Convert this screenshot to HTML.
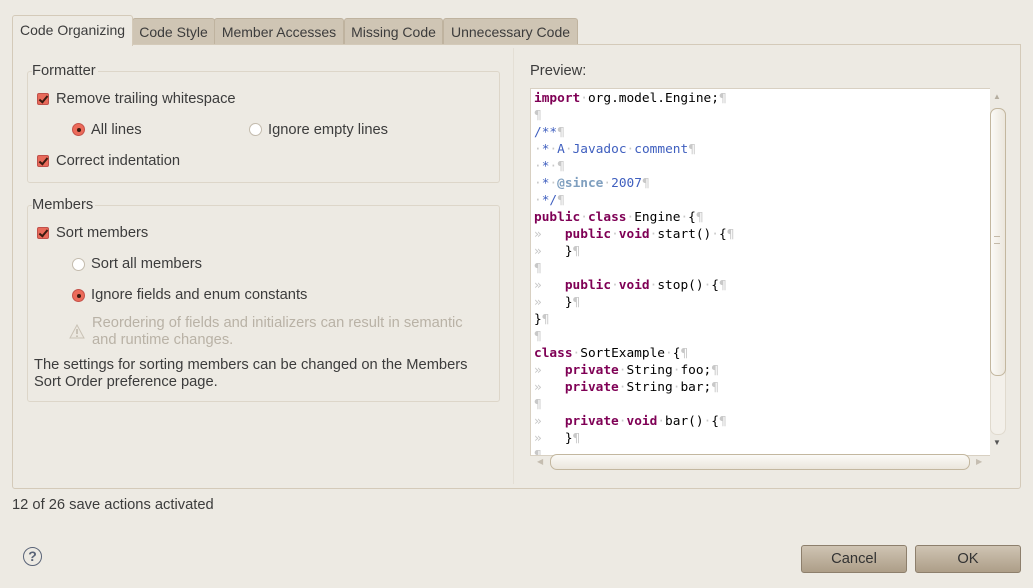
<!DOCTYPE html>
<html><head><meta charset="utf-8"><style>
body{margin:0;width:1033px;height:588px;background:#edeae3;font-family:"Liberation Sans",sans-serif;font-size:14.7px;color:#3c3c3c;position:relative;overflow:hidden}
.a{position:absolute;white-space:nowrap}
.tab{position:absolute;top:18px;height:26px;background:#cfc5b4;border:1px solid #bfb39f;border-bottom:none;border-radius:3px 3px 0 0;line-height:27px;text-align:center;color:#3c3c3c;font-size:14px}
.grp{position:absolute;border:1px solid #ddd6c9;border-radius:3px}
.cb{position:absolute;width:10px;height:10px;border:1px solid #c0504a;background:#e86a5a;border-radius:2px}
.cb:after{content:"";position:absolute;left:3px;top:0px;width:3px;height:7px;border:solid #3a1a10;border-width:0 2px 2px 0;transform:rotate(40deg)}
.rb{position:absolute;width:11px;height:11px;border:1px solid #c4bcae;border-radius:50%;background:#fff}
.rb.on{background:#ec6b5a;border-color:#c4524a}
.rb.on:after{content:"";position:absolute;left:3.5px;top:3.5px;width:4px;height:4px;border-radius:50%;background:#3a1a10}
pre{margin:0;font-family:"DejaVu Sans Mono","Liberation Mono",monospace;font-size:12.8px;line-height:17px;color:#000}
.k{color:#7f0055;font-weight:bold}.c{color:#3f5fbf}.p{color:#c8c8c8}.tg{color:#7f9fbf;font-weight:bold}
.btn{position:absolute;top:545px;height:26px;width:104px;border:1px solid #8d7f6c;border-radius:3px;background:linear-gradient(#cfc4b3,#ad9e88);text-align:center;line-height:27px;color:#333}
.lbl{background:#edeae3;padding-right:2px}
</style></head><body>
<div class="tab" style="left:132px;width:81px">Code Style</div>
<div class="tab" style="left:214px;width:128px">Member Accesses</div>
<div class="tab" style="left:344px;width:97px">Missing Code</div>
<div class="tab" style="left:443px;width:133px">Unnecessary Code</div>
<div class="a" style="left:12px;top:44px;width:1007px;height:443px;border:1px solid #d4cab9;border-radius:0 0 3px 3px"></div>
<div class="a" style="left:12px;top:15px;width:119px;height:30px;background:#edeae3;border:1px solid #d4cab9;border-bottom:none;border-radius:3px 3px 0 0;line-height:29px;text-align:center;font-size:14px">Code Organizing</div>
<div class="a" style="left:513px;top:48px;width:1px;height:436px;background:#e4dfd5"></div>

<div class="grp" style="left:27px;top:71px;width:471px;height:110px"></div>
<div class="a lbl" style="left:32px;top:63px">Formatter</div>
<div class="cb" style="left:37px;top:93px"></div><div class="a" style="left:56px;top:91px">Remove trailing whitespace</div>
<div class="rb on" style="left:72px;top:123px"></div><div class="a" style="left:91px;top:122px">All lines</div>
<div class="rb" style="left:249px;top:123px"></div><div class="a" style="left:268px;top:122px">Ignore empty lines</div>
<div class="cb" style="left:37px;top:155px"></div><div class="a" style="left:56px;top:153px">Correct indentation</div>

<div class="grp" style="left:27px;top:205px;width:471px;height:195px"></div>
<div class="a lbl" style="left:32px;top:197px">Members</div>
<div class="cb" style="left:37px;top:227px"></div><div class="a" style="left:56px;top:225px">Sort members</div>
<div class="rb" style="left:72px;top:258px"></div><div class="a" style="left:91px;top:256px">Sort all members</div>
<div class="rb on" style="left:72px;top:289px"></div><div class="a" style="left:91px;top:287px">Ignore fields and enum constants</div>
<svg class="a" style="left:69px;top:324px" width="16" height="15"><path d="M8 1 L15 14 H1 Z" fill="#ece8e0" stroke="#c9c2b5"/><path d="M8 5v5M8 11.5v1.5" stroke="#c0b9ac" stroke-width="1.6"/></svg>
<div class="a" style="left:92px;top:315px;color:#b9b2a6;line-height:17px">Reordering of fields and initializers can result in semantic<br>and runtime changes.</div>
<div class="a" style="left:34px;top:357px;line-height:17px">The settings for sorting members can be changed on the Members<br>Sort Order preference page.</div>

<div class="a" style="left:530px;top:63px">Preview:</div>
<div class="a" style="left:530px;top:88px;width:459px;height:366px;background:#fff;border:1px solid #d8d0c2;border-right:none;overflow:hidden">
<pre style="padding:0 0 0 3px;margin-top:1px"><span class="k">import</span><span class="p">·</span>org.model.Engine;<span class="p">¶</span>
<span class="p">¶</span>
<span class="c">/**</span><span class="p">¶</span>
<span class="p">·</span><span class="c">*</span><span class="p">·</span><span class="c">A</span><span class="p">·</span><span class="c">Javadoc</span><span class="p">·</span><span class="c">comment</span><span class="p">¶</span>
<span class="p">·</span><span class="c">*</span><span class="p">·¶</span>
<span class="p">·</span><span class="c">*</span><span class="p">·</span><span class="tg">@since</span><span class="p">·</span><span class="c">2007</span><span class="p">¶</span>
<span class="p">·</span><span class="c">*/</span><span class="p">¶</span>
<span class="k">public</span><span class="p">·</span><span class="k">class</span><span class="p">·</span>Engine<span class="p">·</span>{<span class="p">¶</span>
<span class="p">»   </span><span class="k">public</span><span class="p">·</span><span class="k">void</span><span class="p">·</span>start()<span class="p">·</span>{<span class="p">¶</span>
<span class="p">»   </span>}<span class="p">¶</span>
<span class="p">¶</span>
<span class="p">»   </span><span class="k">public</span><span class="p">·</span><span class="k">void</span><span class="p">·</span>stop()<span class="p">·</span>{<span class="p">¶</span>
<span class="p">»   </span>}<span class="p">¶</span>
}<span class="p">¶</span>
<span class="p">¶</span>
<span class="k">class</span><span class="p">·</span>SortExample<span class="p">·</span>{<span class="p">¶</span>
<span class="p">»   </span><span class="k">private</span><span class="p">·</span>String<span class="p">·</span>foo;<span class="p">¶</span>
<span class="p">»   </span><span class="k">private</span><span class="p">·</span>String<span class="p">·</span>bar;<span class="p">¶</span>
<span class="p">¶</span>
<span class="p">»   </span><span class="k">private</span><span class="p">·</span><span class="k">void</span><span class="p">·</span>bar()<span class="p">·</span>{<span class="p">¶</span>
<span class="p">»   </span>}<span class="p">¶</span>
<span class="p">¶</span></pre></div>
<div class="a" style="left:993px;top:92px;font-size:8px;color:#b5ad9f">▲</div>
<div class="a" style="left:990px;top:108px;width:14px;height:325px;border:1px solid #e0dace;border-radius:7px;background:#f3f0ea"></div>
<div class="a" style="left:990px;top:108px;width:14px;height:266px;border:1px solid #c3b79f;border-radius:7px;background:linear-gradient(90deg,#fbfaf7,#ebe6dc)"></div>
<div class="a" style="left:994px;top:236px;width:6px;height:6px;border-top:1px solid #c3b9a8;border-bottom:1px solid #c3b9a8"></div>
<div class="a" style="left:993px;top:438px;font-size:8px;color:#555">▼</div>
<div class="a" style="left:537px;top:457px;font-size:8px;color:#c5bdb0">◀</div>
<div class="a" style="left:550px;top:454px;width:418px;height:14px;border:1px solid #c3b79f;border-radius:7px;background:linear-gradient(#fbfaf7,#ebe6dc)"></div>
<div class="a" style="left:976px;top:457px;font-size:8px;color:#c5bdb0">▶</div>

<div class="a" style="left:12px;top:497px">12 of 26 save actions activated</div>
<div class="a" style="left:23px;top:547px;width:17px;height:17px;border:1.5px solid #5a6478;border-radius:50%;text-align:center;line-height:17px;font-weight:bold;color:#5a6478;font-size:14px">?</div>
<div class="btn" style="left:801px">Cancel</div>
<div class="btn" style="left:915px">OK</div>
</body></html>
